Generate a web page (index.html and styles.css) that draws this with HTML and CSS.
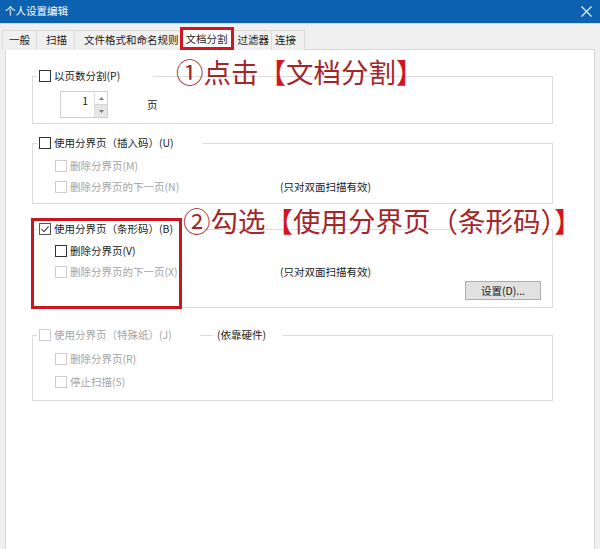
FILE: index.html
```html
<!DOCTYPE html>
<html lang="zh-CN">
<head>
<meta charset="utf-8">
<title>个人设置编辑</title>
<link rel="stylesheet" href="styles.css">
</head>
<body>
<div class="window">
  <header class="titlebar">
    <span class="title">个人设置编辑</span>
    <svg class="close" width="11" height="11" viewBox="0 0 11 11"><path d="M0.5 0.5L10.5 10.5M10.5 0.5L0.5 10.5" stroke="#ffffff" stroke-width="1.1" fill="none"/></svg>
  </header>

  <nav class="tabs">
    <div class="tab">一般</div>
    <div class="tab">扫描</div>
    <div class="tab">文件格式和命名规则</div>
    <div class="tab active">文档分割</div>
    <div class="tab">过滤器</div>
    <div class="tab">连接</div>
  </nav>

  <main class="panel">
    <fieldset class="group g1">
      <legend class="legend lw1"><span class="cb"></span><span>以页数分割(P)</span></legend>
      <div class="spinrow">
        <div class="spin">
          <div class="spin-val">1</div>
          <div class="spin-btns">
            <span class="spin-up"><svg width="5" height="3" viewBox="0 0 5 3"><path d="M0 3L2.5 0L5 3Z" fill="#7a7a7a"/></svg></span>
            <span class="spin-down"><svg width="5" height="3" viewBox="0 0 5 3"><path d="M0 0L2.5 3L5 0Z" fill="#7a7a7a"/></svg></span>
          </div>
        </div>
        <span class="unit">页</span>
      </div>
    </fieldset>

    <fieldset class="group g2">
      <legend class="legend lw2"><span class="cb"></span><span>使用分界页（插入码）(U)</span></legend>
      <div class="row"><span class="opt dis"><span class="cb dis"></span>删除分界页(M)</span></div>
      <div class="row"><span class="opt dis"><span class="cb dis"></span>删除分界页的下一页(N)</span><span class="hint">(只对双面扫描有效)</span></div>
    </fieldset>

    <fieldset class="group g3">
      <legend class="legend lw2"><span class="cb on"><svg width="10" height="10" viewBox="0 0 10 10"><path d="M1.5 5.2L4 7.6L8.6 2.4" stroke="#444" stroke-width="1.1" fill="none"/></svg></span><span>使用分界页（条形码）(B)</span></legend>
      <div class="row"><span class="opt"><span class="cb"></span>删除分界页(V)</span></div>
      <div class="row"><span class="opt dis"><span class="cb dis"></span>删除分界页的下一页(X)</span><span class="hint">(只对双面扫描有效)</span></div>
      <div class="btnrow"><button class="btn" type="button">设置(D)...</button></div>
    </fieldset>

    <fieldset class="group g4">
      <legend class="legend lw4"><span class="legend-main dis"><span class="cb dis"></span><span>使用分界页（特殊纸）(J)</span></span><span class="seg"></span><span class="legend-note">(依靠硬件)</span></legend>
      <div class="row"><span class="opt dis"><span class="cb dis"></span>删除分界页(R)</span></div>
      <div class="row"><span class="opt dis"><span class="cb dis"></span>停止扫描(S)</span></div>
    </fieldset>

    <div class="callout c1">①点击<span class="br">【</span>文档分割<span class="br">】</span></div>
    <div class="callout c2">②勾选<span class="br">【</span>使用分界页（条形码）<span class="br">】</span></div>
    <div class="mark"></div>
  </main>
</div>
</body>
</html>
```

FILE: styles.css
```css
* { box-sizing: border-box; }

html, body {
  margin: 0;
  padding: 0;
}

body {
  width: 600px;
  height: 549px;
  overflow: hidden;
  background: #f0f0f0;
  font-family: "Noto Sans CJK SC", "Microsoft YaHei", sans-serif;
  font-size: 10.5px;
  color: #1a1a1a;
}

.window {
  display: flex;
  flex-direction: column;
  height: 549px;
}

.titlebar {
  height: 24px;
  flex: none;
  display: flex;
  align-items: center;
  justify-content: space-between;
  padding: 0 8px 1px 5px;
  background: #0c61b0;
  border-bottom: 1px solid #bfe2f4;
  color: #ffffff;
}

.title {
  font-size: 10.5px;
  line-height: 14px;
}

.tabs {
  height: 26px;
  flex: none;
  display: flex;
  align-items: flex-end;
  padding-left: 2px;
  position: relative;
  z-index: 1;
  margin-bottom: -1px;
}

.tab {
  height: 20px;
  padding: 0 6px;
  margin-right: -1px;
  border: 1px solid #dadada;
  border-bottom: none;
  background: #f0f0f0;
  line-height: 18px;
  white-space: nowrap;
}

.tab:nth-child(2) { padding: 0 7px 0 9px; }
.tab:nth-child(3) { padding: 0 2px 0 9px; }
.tab:nth-child(5) { padding: 0 2px 0 4px; }
.tab:nth-child(6) { padding: 0 8px 0 3px; }

.tab.active {
  height: 23px;
  margin: 0 -1px 0 -1px;
  padding: 0 5px;
  background: #ffffff;
  line-height: 21px;
  outline: 3px solid #d0161e;
  outline-offset: -3px;
  position: relative;
  z-index: 2;
}

.panel {
  flex: 1;
  margin: 0 5px;
  border: 1px solid #d7d7d7;
  border-bottom: none;
  background: #ffffff;
  padding: 18px 0 0 26px;
  position: relative;
}

.group {
  width: 521px;
  min-width: 0;
  margin: 0;
  padding: 0;
  border: 1px solid #dcdcdc;
}

.legend {
  display: flex;
  align-items: center;
  gap: 3px;
  height: 16px;
  line-height: 16px;
  margin-left: 4px;
  padding: 0 2px;
  white-space: nowrap;
}

.lw1 { width: 116px; }
.lw2 { width: 166px; }
.lw4 { width: 246px; gap: 0; padding: 0 0 0 2px; }

.legend-main {
  display: flex;
  align-items: center;
  gap: 3px;
  width: 161px;
}

.seg {
  width: 13px;
  height: 1px;
  background: #dcdcdc;
  align-self: flex-start;
  margin-top: 8px;
}

.legend-note {
  padding-left: 4px;
  width: 70px;
  color: #1a1a1a;
}

.cb {
  width: 12px;
  height: 12px;
  flex: none;
  border: 1px solid #333333;
  background: #ffffff;
  display: inline-flex;
  align-items: center;
  justify-content: center;
}

.cb.dis { border-color: #cccccc; }
.cb.on { border-color: #555555; }

.dis { color: #a3a3a3; }

.g1 { padding: 7px 0 5px 0; }
.g2 { margin-top: 11px; padding: 4px 0 6px 0; }
.g3 { margin-top: 17px; padding: 3px 0 7px 0; }
.g4 { margin-top: 19px; padding: 5px 0 8px 0; }
.g4 .row + .row { margin-top: 2px; }

.spinrow {
  display: flex;
  align-items: center;
  gap: 39px;
  padding-left: 27px;
}

.spin {
  display: flex;
  width: 48px;
  height: 27px;
  border: 1px solid #cfcfcf;
}

.spin-val {
  flex: 1;
  text-align: right;
  padding: 2px 6px 0 0;
  line-height: 14px;
}

.spin-btns {
  width: 13px;
  display: flex;
  flex-direction: column;
  border-left: 1px solid #dddddd;
}

.spin-up, .spin-down {
  flex: 1;
  display: flex;
  align-items: center;
  justify-content: center;
}

.spin-down {
  background: #e6e6e6;
  border-top: 1px solid #d6d6d6;
}

.unit {
  line-height: 14px;
  padding-top: 1px;
}

.row {
  display: flex;
  align-items: center;
  height: 21px;
  padding-left: 22px;
}

.opt {
  display: flex;
  align-items: center;
  gap: 3px;
  width: 225px;
  white-space: nowrap;
}

.hint {
  white-space: nowrap;
  color: #1a1a1a;
}

.btnrow {
  display: flex;
  justify-content: flex-end;
  padding-right: 11px;
  margin-top: -1px;
}

.btn {
  width: 76px;
  height: 19px;
  padding: 0;
  border: 1px solid #adadad;
  background: #e1e1e1;
  font-family: inherit;
  font-size: 10.5px;
  color: #1a1a1a;
  line-height: 17px;
}

.callout {
  position: absolute;
  white-space: nowrap;
  color: #a3262b;
  line-height: 1;
  font-weight: 400;
}

.callout .br { color: #d3161d; }

.c1 {
  left: 170px;
  top: 8px;
  font-size: 27.5px;
}

.c2 {
  left: 177px;
  top: 157px;
  font-size: 27.5px;
}

.mark {
  position: absolute;
  left: 25px;
  top: 168px;
  width: 151px;
  height: 91px;
  border: 3px solid #c8161e;
}
```
